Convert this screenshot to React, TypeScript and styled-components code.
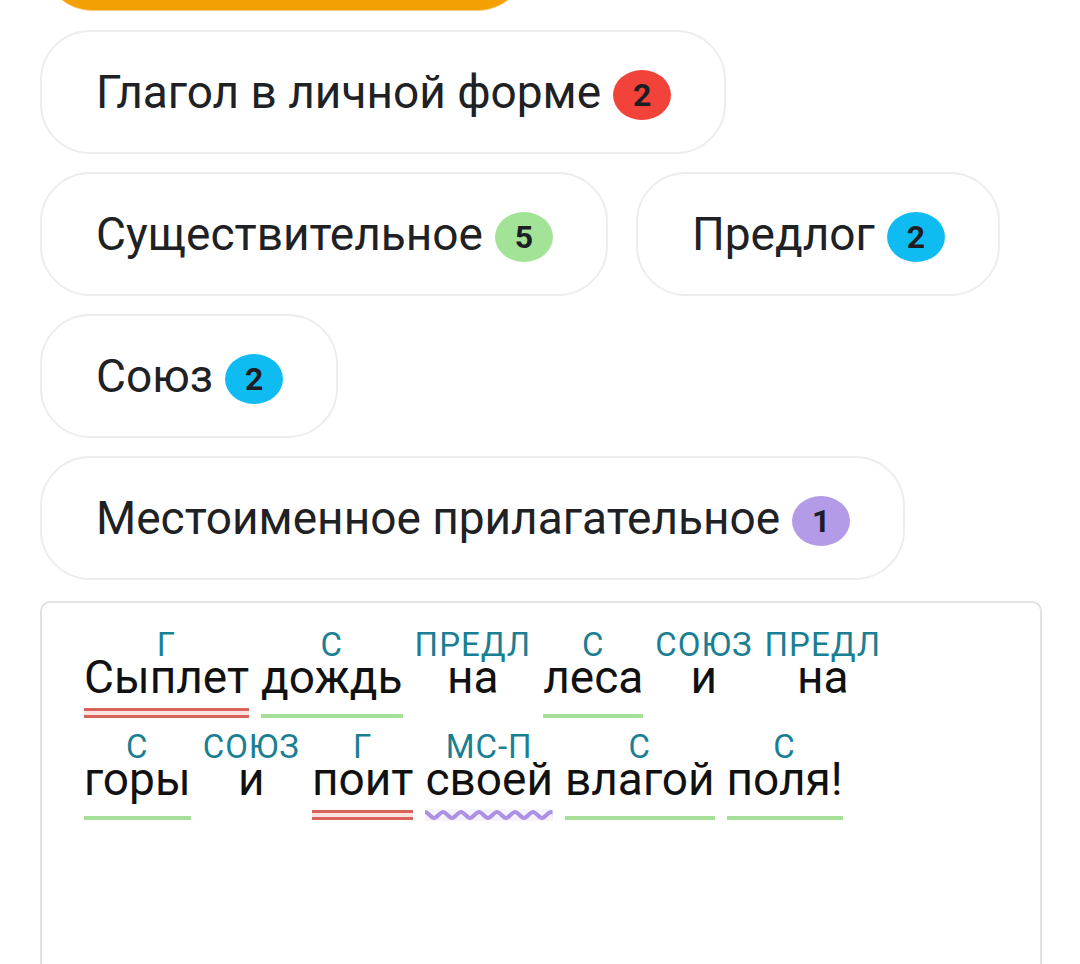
import React from "react";
import styled, { createGlobalStyle } from "styled-components";

const GlobalStyle = createGlobalStyle`
  html, body {
    margin: 0;
    padding: 0;
    background: #ffffff;
    overflow: hidden;
  }
  body {
    font-family: Roboto, "Noto Sans", "Liberation Sans", sans-serif;
    color: #202124;
  }
`;

type Mark = "verb" | "noun" | "pron" | "none";

interface Word {
  tag: string;
  text: string;
  mark: Mark;
}

const chips = [
  [{ title: "Глагол в личной форме", count: 2, color: "#f1433a" }],
  [
    { title: "Существительное", count: 5, color: "#a2e398" },
    { title: "Предлог", count: 2, color: "#0fbcf2" },
  ],
  [{ title: "Союз", count: 2, color: "#0fbcf2" }],
  [{ title: "Местоименное прилагательное", count: 1, color: "#b39be8" }],
];

const lines: Word[][] = [
  [
    { tag: "Г", text: "Сыплет", mark: "verb" },
    { tag: "С", text: "дождь", mark: "noun" },
    { tag: "ПРЕДЛ", text: "на", mark: "none" },
    { tag: "С", text: "леса", mark: "noun" },
    { tag: "СОЮЗ", text: "и", mark: "none" },
    { tag: "ПРЕДЛ", text: "на", mark: "none" },
  ],
  [
    { tag: "С", text: "горы", mark: "noun" },
    { tag: "СОЮЗ", text: "и", mark: "none" },
    { tag: "Г", text: "поит", mark: "verb" },
    { tag: "МС-П", text: "своей", mark: "pron" },
    { tag: "С", text: "влагой", mark: "noun" },
    { tag: "С", text: "поля!", mark: "noun" },
  ],
];

export default function App() {
  return (
    <>
      <GlobalStyle />
      <Page>
        <SelectedChip />
        {chips.map((row, i) => (
          <ChipRow key={i}>
            {row.map((c) => (
              <Chip key={c.title}>
                <ChipTitle>{c.title}</ChipTitle>
                <Badge $bg={c.color}>{c.count}</Badge>
              </Chip>
            ))}
          </ChipRow>
        ))}
        <SentenceBox>
          {lines.map((line, i) => (
            <Line key={i}>
              {line.map((w, j) => (
                <WordItem key={j}>
                  <Tag>{w.tag}</Tag>
                  <WordText>{w.text}</WordText>
                  <UnderlineZone>
                    {w.mark === "verb" && <DoubleLine />}
                    {w.mark === "noun" && <SolidLine />}
                    {w.mark === "pron" && <WavyLine />}
                  </UnderlineZone>
                </WordItem>
              ))}
            </Line>
          ))}
        </SentenceBox>
      </Page>
    </>
  );
}

function WavyLine() {
  return (
    <WavySvg width="100%" height="12">
      <defs>
        <pattern id="wave" width="18" height="12" patternUnits="userSpaceOnUse">
          <path
            d="M0 3 C3 3 6 9 9 9 S15 3 18 3"
            fill="none"
            stroke="#ab90e6"
            strokeWidth="4"
          />
        </pattern>
      </defs>
      <rect width="100%" height="12" fill="url(#wave)" />
    </WavySvg>
  );
}

const Page = styled.div`
  display: flex;
  flex-direction: column;
  gap: 18px;
  padding: 0 38px 0 40px;

  & > * {
    flex-shrink: 0;
  }
`;

const SelectedChip = styled.div`
  width: 482px;
  height: 60px;
  margin-top: -50px;
  margin-left: 4px;
  margin-bottom: 2px;
  background: #f2a003;
  border-radius: 0 0 48px 48px;
  box-shadow: 0 1px 0 #f7cf7c;
`;

const ChipRow = styled.div`
  display: flex;
  gap: 28px;
`;

const Chip = styled.div`
  display: flex;
  align-items: center;
  gap: 12px;
  height: 124px;
  box-sizing: border-box;
  padding: 0 53px 0 54px;
  border: 2px solid #ededed;
  border-radius: 50px;
  background: #fff;
`;

const ChipTitle = styled.span`
  font-size: 46px;
  color: #202124;
`;

const Badge = styled.span<{ $bg: string }>`
  display: flex;
  align-items: center;
  justify-content: center;
  width: 58px;
  height: 50px;
  margin-top: 6px;
  border-radius: 50%;
  background: ${(p) => p.$bg};
  color: #1d1d24;
  font-weight: 700;
  font-size: 32px;
`;

const SentenceBox = styled.div`
  display: flex;
  flex-direction: column;
  gap: 16px;
  width: 1002px;
  min-height: 420px;
  box-sizing: border-box;
  margin-top: 3px;
  padding: 30px 20px 0 42px;
  border: 2px solid #e2e2e2;
  border-radius: 10px;
`;

const Line = styled.div`
  display: flex;
  gap: 12px;
`;

const WordItem = styled.div`
  display: flex;
  flex-direction: column;
  align-items: center;
`;

const Tag = styled.span`
  font-size: 33px;
  line-height: 24px;
  letter-spacing: 1px;
  color: #1b7f94;
`;

const WordText = styled.span`
  font-size: 46px;
  line-height: 40px;
  color: #111;
`;

const UnderlineZone = styled.div`
  align-self: stretch;
  contain: inline-size;
  height: 22px;
  display: flex;
  flex-direction: column;
  justify-content: flex-end;
  padding-bottom: 1px;
  box-sizing: border-box;
`;

const SolidLine = styled.div`
  height: 4px;
  background: #a6df98;
`;

const DoubleLine = styled.div`
  height: 10px;
  box-sizing: border-box;
  border-top: 3px solid #d9625b;
  border-bottom: 3px solid #d9625b;
  background: #fbe3e1;
`;

const WavySvg = styled.svg`
  display: block;
  margin-bottom: -1px;
  background: #f6f3fd;
`;
